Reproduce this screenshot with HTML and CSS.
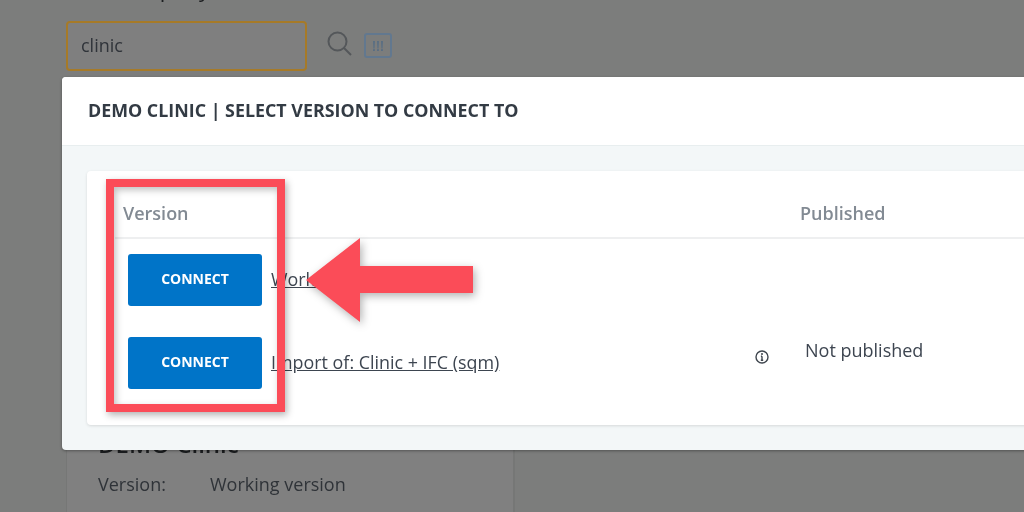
FILE: index.html
```html
<!DOCTYPE html>
<html>
<head>
    <meta charset="utf-8">
    <title>Select version</title>
    <link rel="stylesheet" href="styles.css">
</head>
<body>
    <div class="page">
        <h2 class="page-title">Find company</h2>
        <div class="search-row">
            <div class="search-box">clinic</div>
            <svg class="search-icon" width="26" height="26" viewBox="0 0 26 26">
                <circle cx="10.5" cy="10.5" r="9"/>
                <path d="M17 17L24 24"/>
            </svg>
            <div class="flag-btn">!!!</div>
        </div>
        <div class="detail">
            <h2 class="detail-title">DEMO Clinic</h2>
            <div class="detail-row">
                <span class="detail-label">Version:</span>
                <span>Working version</span>
            </div>
        </div>
    </div>

    <div class="modal">
        <div class="modal-head">DEMO CLINIC | SELECT VERSION TO CONNECT TO</div>
        <div class="modal-body">
            <div class="card">
                <div class="row row-head">
                    <div class="col-name">Version</div>
                    <div>Published</div>
                </div>
                <div class="row row-one">
                    <div class="col-name">
                        <a class="btn">CONNECT</a>
                        <a class="link">Working version</a>
                    </div>
                </div>
                <div class="row row-two">
                    <div class="col-name">
                        <a class="btn">CONNECT</a>
                        <a class="link">Import of: Clinic + IFC (sqm)</a>
                        <svg class="info" width="14" height="14" viewBox="0 0 14 14">
                            <circle cx="7" cy="7" r="6"/>
                            <path d="M7 6.2V10.2M5.8 10.2H8.2M5.9 6.2H7"/>
                            <circle class="dot" cx="7" cy="4" r="1"/>
                        </svg>
                    </div>
                    <div class="not-published">Not published</div>
                </div>
            </div>
        </div>
    </div>

    <!-- annotation -->
    <div class="mark-box"></div>
    <svg class="mark-arrow" width="190" height="100" viewBox="0 0 190 100">
        <polygon points="6,47 60,5 60,33 173,33 173,60 60,60 60,89"/>
    </svg>
</body>
</html>
```

FILE: styles.css
```css
html, body{
    margin: 0;
    height: 100%;
    overflow: hidden;
}
body{
    position: relative;
    background: #7c7d7c;
    font-family: "Open Sans", "Noto Sans", sans-serif;
    color: #333940;
}
.page{
    padding-left: 66px;
    height: 512px;
    display: flex;
    flex-direction: column;
    filter: blur(.4px);
}
.page-title{
    margin: -27px 0 0;
    font-size: 22px;
    line-height: 30px;
    font-weight: 400;
    color: #1c1e20;
}
.search-row{
    display: flex;
    align-items: center;
    margin-top: 18px;
}
.search-box{
    box-sizing: border-box;
    width: 241px;
    height: 50px;
    padding-left: 13px;
    border: 2.5px solid #a67a28;
    border-radius: 4px;
    background: #7f7f7f;
    font-size: 18px;
    line-height: 45px;
    color: #30343a;
}
.search-icon{
    margin-left: 20px;
    margin-top: -4px;
    fill: none;
    stroke: #54575a;
    stroke-width: 2;
}
.flag-btn{
    box-sizing: border-box;
    width: 28px;
    height: 25px;
    margin-left: 11px;
    margin-top: -2px;
    border: 2px solid #62788f;
    border-radius: 3px;
    font-size: 15px;
    font-weight: 400;
    line-height: 20px;
    text-align: center;
    color: #4f6a86;
}
.detail{
    flex: 1;
    width: 449px;
    box-sizing: border-box;
    margin-top: 357px;
    padding-left: 31px;
    background: #808080;
    border-right: 2px solid #767776;
    border-left: 1px solid #767776;
}
.detail-title{
    margin: 0;
    font-size: 24px;
    line-height: 32px;
    font-weight: 600;
    color: #1c1e20;
}
.detail-row{
    display: flex;
    margin-top: 12px;
    font-size: 18px;
    line-height: 24px;
    color: #2f3338;
}
.detail-label{
    width: 112px;
}

/* modal sits over the page */
.modal{
    position: absolute;
    left: 62px;
    top: 77px;
    width: 1000px;
    height: 373px;
    border-radius: 4px 0 0 4px;
    background: #f3f7f8;
    box-shadow: 0 1px 3px rgba(0,0,0,.35);
    filter: blur(.4px);
}
.modal-head{
    box-sizing: border-box;
    height: 69px;
    padding-left: 26px;
    background: #fff;
    border-bottom: 1px solid #e8eeef;
    border-radius: 4px 0 0 0;
    font-size: 17.85px;
    font-weight: 700;
    line-height: 67px;
    color: #333b44;
}
.modal-body{
    padding: 25px 0 0 25px;
}
.card{
    box-sizing: border-box;
    height: 254px;
    padding-left: 28px;
    background: #fff;
    border-radius: 4px;
    box-shadow: 0 1px 3px rgba(0,0,0,.12);
}
.row{
    display: flex;
}
.col-name{
    width: 685px;
    display: flex;
    align-items: center;
}
.row-head{
    height: 68px;
    align-items: center;
    border-bottom: 2px solid #eeeff0;
    box-sizing: border-box;
    font-size: 18px;
    font-weight: 600;
    color: #828a93;
    padding-top: 18px;
}
.row-head .col-name{
    padding-left: 8px;
    box-sizing: border-box;
}
.row-one{
    padding-top: 15px;
}
.row-two{
    padding-top: 31px;
}
.btn{
    display: block;
    box-sizing: border-box;
    width: 134px;
    height: 52px;
    margin-left: 13px;
    border-radius: 3px;
    background: #0074c8;
    font-size: 14px;
    font-weight: 700;
    line-height: 50px;
    text-align: center;
    color: #fff;
}
.link{
    margin-left: 9px;
    margin-top: -2px;
    font-size: 17.9px;
    color: #3d4550;
    text-decoration: underline;
}
.info{
    margin-left: 256px;
    margin-top: -12px;
    fill: none;
    stroke: #3f464e;
    stroke-width: 1.4;
}
.info .dot{
    fill: #3f464e;
    stroke: none;
}
.not-published{
    margin-left: 5px;
    margin-top: 1px;
    font-size: 18px;
    line-height: 24px;
    color: #3d4550;
}

/* red annotation drawn on top of the screenshot */
.mark-box{
    position: absolute;
    left: 106px;
    top: 179px;
    width: 179px;
    height: 233px;
    box-sizing: border-box;
    border: 8px solid #fb4c58;
    box-shadow: 2px 3px 7px rgba(0,0,0,.3), inset 2px 3px 7px rgba(0,0,0,.25);
}
.mark-arrow{
    position: absolute;
    left: 300px;
    top: 233px;
    fill: #fb4c58;
    filter: drop-shadow(2px 3px 4px rgba(0,0,0,.3));
}
```
